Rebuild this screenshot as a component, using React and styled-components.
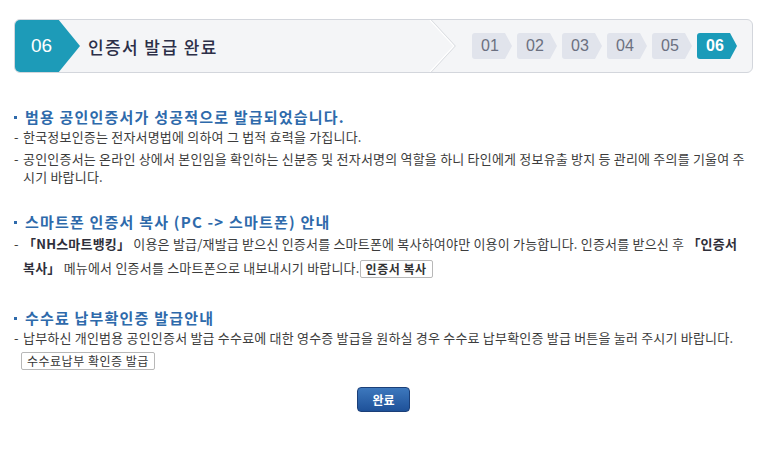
import React from 'react';
import styled, { createGlobalStyle } from 'styled-components';

const GlobalStyle = createGlobalStyle`
    body {
        margin: 0;
        background: #ffffff;
        font-family: "Noto Sans CJK KR", "Liberation Sans", sans-serif;
        color: #3c3c3c;
    }
`
const Page = styled.div`
    width: 779px;
    padding: 19px 26px 30px 14px;
    box-sizing: border-box;
`
const Header = styled.div`
    height: 54px;
    display: flex;
    align-items: center;
    border: 1px solid #d3d6dc;
    border-radius: 6px;
    background: #f4f5f7;
    overflow: hidden;
    box-sizing: border-box;
`
const Badge = styled.div`
    align-self: stretch;
    width: 66px;
    margin: -1px 0 -1px -1px;
    padding-left: 17px;
    display: flex;
    align-items: center;
    background: #1d9bb8;
    color: #ffffff;
    font-family: "Liberation Sans", sans-serif;
    font-size: 19px;
    clip-path: polygon(0 0, 44px 0, 100% 50%, 44px 100%, 0 100%);
    border-radius: 6px 0 0 6px;
    box-sizing: border-box;
`
const Title = styled.h1`
    margin: 0 0 0 8px;
    flex: 1;
    font-size: 17px;
    letter-spacing: 1.4px;
    font-weight: 500;
    color: #2c2f48;
`
const Divider = styled.svg`
    align-self: stretch;
    width: 30px;
    flex-shrink: 0;
`
const Steps = styled.div`
    display: flex;
    gap: 5px;
    margin: 0 15px 0 14px;
`
const Step = styled.div`
    width: 40px;
    height: 26px;
    padding-left: 9px;
    display: flex;
    align-items: center;
    box-sizing: border-box;
    background: ${p => (p.$active ? '#1a9bb9' : '#e1e4ec')};
    color: ${p => (p.$active ? '#ffffff' : '#6b7080')};
    font-family: "Liberation Sans", sans-serif;
    font-size: 16px;
    font-weight: ${p => (p.$active ? 700 : 400)};
    border-radius: 3px 0 0 3px;
    clip-path: polygon(0 0, calc(100% - 7px) 0, 100% 50%, calc(100% - 7px) 100%, 0 100%);
`
const Section = styled.section`
    margin-top: ${p => p.$top}px;
`
const SectionTitle = styled.h2`
    margin: 0;
    padding-left: 11px;
    position: relative;
    font-size: 15px;
    letter-spacing: 1.2px;
    line-height: 20px;
    font-weight: 700;
    color: #2e6aab;
    &::before {
        content: '';
        position: absolute;
        left: 0;
        top: 9px;
        width: 3px;
        height: 3px;
        background: #2e6aab;
    }
`
const List = styled.ul`
    list-style: none;
    margin: ${p => p.$gap}px 0 0;
    padding: 0;
    display: flex;
    flex-direction: column;
    gap: 4px;
`
const Item = styled.li`
    display: flex;
    font-size: 13px;
    letter-spacing: 0.2px;
    line-height: ${p => p.$lh || 18}px;
    color: #3c3c3c;
`
const Dash = styled.span`
    width: 9px;
    flex-shrink: 0;
`
const Strong = styled.b`
    font-weight: 700;
    color: #2f2f3a;
`
const SmallButton = styled.button`
    height: 18px;
    padding: 0 5px;
    margin-left: ${p => p.$left || 0}px;
    border: 1px solid #b8b8b8;
    border-radius: 2px;
    background: #ffffff;
    font-family: "Noto Sans CJK KR", sans-serif;
    font-size: 12px;
    letter-spacing: 0.5px;
    line-height: 16px;
    font-weight: ${p => (p.$bold ? 700 : 400)};
    color: #333333;
    vertical-align: middle;
`
const ButtonRow = styled.div`
    display: flex;
    margin-top: 5px;
`
const Footer = styled.div`
    display: flex;
    justify-content: center;
    margin-top: 17px;
`
const DoneButton = styled.button`
    width: 53px;
    height: 25px;
    border: 1px solid #1b3f78;
    border-radius: 4px;
    background: linear-gradient(#3d78bd, #1e5199);
    color: #ffffff;
    font-family: "Noto Sans CJK KR", sans-serif;
    font-size: 12px;
    font-weight: 700;
    padding: 0;
`

export default function App() {
    const steps = ['01', '02', '03', '04', '05', '06'];
    return (
        <Page>
            <GlobalStyle />
            <Header>
                <Badge>06</Badge>
                <Title>인증서 발급 완료</Title>
                <Divider viewBox="0 0 30 54" preserveAspectRatio="none">
                    <polyline points="3,0 27,27 3,54" fill="none" stroke="#d6d9de" strokeWidth="1.2" />
                    <polyline points="2,0 26,27 2,54" fill="none" stroke="#ffffff" strokeWidth="1.2" />
                </Divider>
                <Steps>
                    {steps.map(s => (
                        <Step key={s} $active={s === '06'}>{s}</Step>
                    ))}
                </Steps>
            </Header>

            <Section $top={34}>
                <SectionTitle>범용 공인인증서가 성공적으로 발급되었습니다.</SectionTitle>
                <List $gap={1}>
                    <Item><Dash>-</Dash><span>한국정보인증는 전자서명법에 의하여 그 법적 효력을 가집니다.</span></Item>
                    <Item>
                        <Dash>-</Dash>
                        <span>공인인증서는 온라인 상에서 본인임을 확인하는 신분증 및 전자서명의 역할을 하니 타인에게 정보유출 방지 등 관리에 주의를 기울여 주<br />시기 바랍니다.</span>
                    </Item>
                </List>
            </Section>

            <Section $top={26}>
                <SectionTitle>스마트폰 인증서 복사 (PC -&gt; 스마트폰) 안내</SectionTitle>
                <List $gap={0}>
                    <Item $lh={24}>
                        <Dash>-</Dash>
                        <span>
                            <Strong>「NH스마트뱅킹」</Strong> 이용은 발급/재발급 받으신 인증서를 스마트폰에 복사하여야만 이용이 가능합니다. 인증서를 받으신 후 <Strong>「인증서<br />복사」</Strong> 메뉴에서 인증서를 스마트폰으로 내보내시기 바랍니다.
                            <SmallButton $bold>인증서 복사</SmallButton>
                        </span>
                    </Item>
                </List>
            </Section>

            <Section $top={28}>
                <SectionTitle>수수료 납부확인증 발급안내</SectionTitle>
                <List $gap={1}>
                    <Item>
                        <Dash>-</Dash>
                        <span>납부하신 개인범용 공인인증서 발급 수수료에 대한 영수증 발급을 원하실 경우 수수료 납부확인증 발급 버튼을 눌러 주시기 바랍니다.</span>
                    </Item>
                </List>
                <ButtonRow>
                    <SmallButton $left={7}>수수료납부 확인증 발급</SmallButton>
                </ButtonRow>
            </Section>

            <Footer>
                <DoneButton>완료</DoneButton>
            </Footer>
        </Page>
    );
}
